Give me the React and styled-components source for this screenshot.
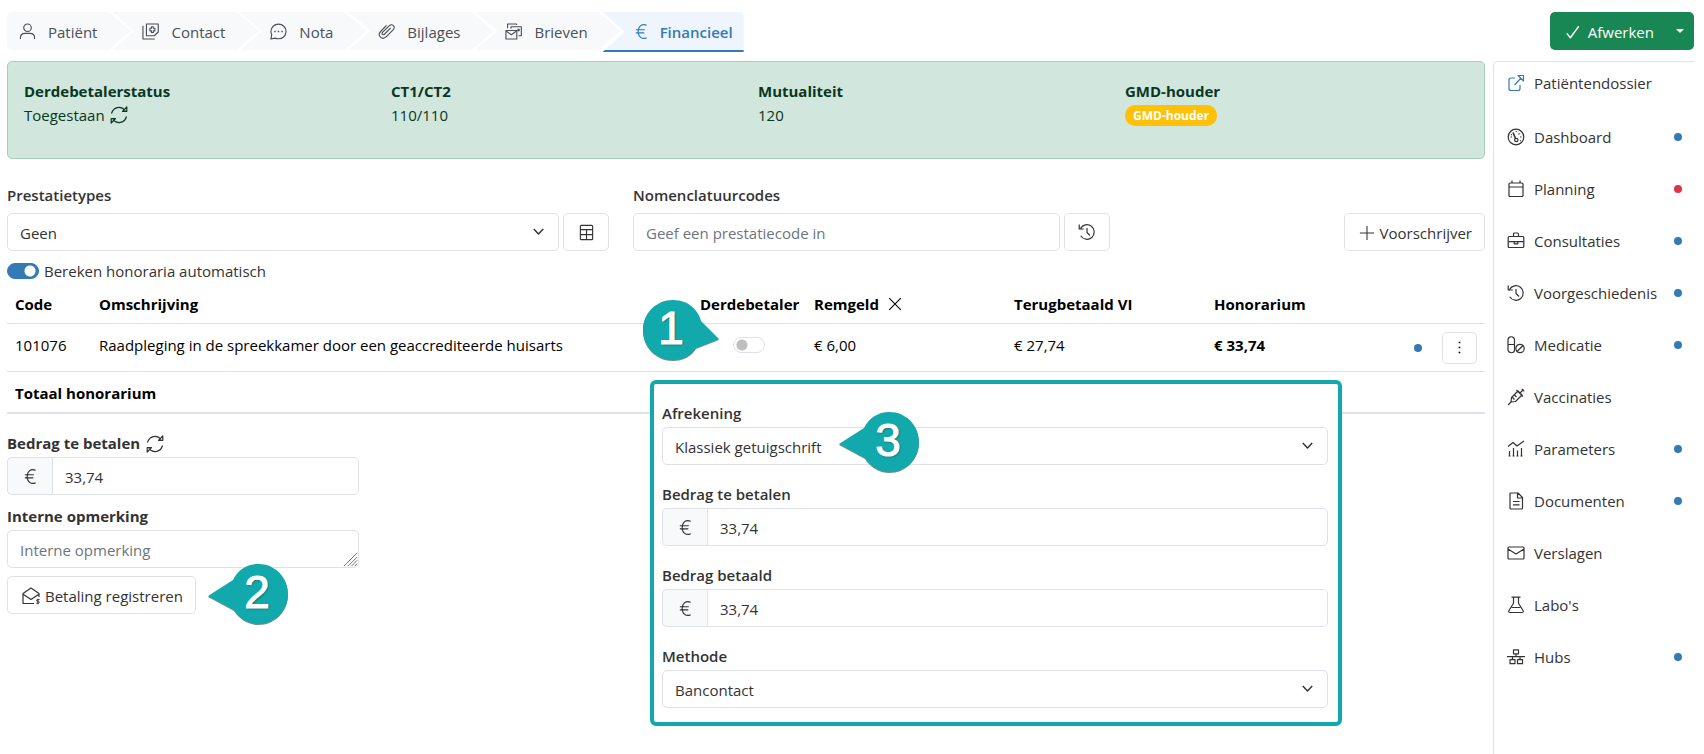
import React, { useState } from 'react';
import styled, { createGlobalStyle, css } from 'styled-components';

const GlobalStyle = createGlobalStyle`
  * {
    box-sizing: border-box;
  }

  body {
    margin: 0;
    background: #fff;
    color: #333;
    font-family: 'Segoe UI', 'Open Sans', 'Noto Sans', sans-serif;
    font-size: 15px;
    line-height: 24px;
  }

  button, input, select, textarea {
    font: inherit;
    color: inherit;
  }
`;

const Page = styled.div`
  display: flex;
  flex-direction: column;
  gap: 11px;
  min-height: 100vh;
  padding: 12px 10px 0 7px;
`;

const TopBar = styled.header`
  display: flex;
  justify-content: space-between;
  height: 38px;
`;

const Tabs = styled.nav`
  display: flex;
`;

const Tab = styled.a`
  display: flex;
  align-items: center;
  gap: 12px;
  height: 38px;
  margin-left: -18px;
  padding: 0 33px 0 30px;
  background: #f8f9fb;
  color: #495057;
  text-decoration: none;
  clip-path: polygon(0 0, calc(100% - 22px) 0, 100% 50%, calc(100% - 22px) 100%, 0 100%, 22px 50%);

  &:first-child {
    margin-left: 0;
    padding-left: 12px;
    border-radius: 5px 0 0 5px;
    clip-path: polygon(0 0, calc(100% - 22px) 0, 100% 50%, calc(100% - 22px) 100%, 0 100%);
  }

  ${(props) => props.$active && css`
    gap: 10px;
    height: 40px;
    padding-right: 11px;
    border-bottom: 2px solid #337ab7;
    border-radius: 0 5px 0 0;
    background: #eff5fd;
    color: #337ab7;
    font-weight: 600;
    clip-path: polygon(0 0, 100% 0, 100% 100%, 0 100%, 22px 50%);
  `}
`;

const TabLabel = styled.span`
  padding-top: 2px;
`;

const SplitButton = styled.div`
  display: flex;
  border-radius: 5px;
  overflow: hidden;
`;

const FinishButton = styled.button`
  display: flex;
  align-items: center;
  gap: 7px;
  padding: 2px 12px 0 15px;
  border: 0;
  background: #198754;
  color: #fff;
`;

const CaretButton = styled.button`
  display: flex;
  align-items: center;
  padding: 0 10px;
  border: 0;
  background: #198754;
  color: #fff;
`;

const Columns = styled.div`
  display: flex;
  flex: 1;
  gap: 8px;
`;

const Main = styled.main`
  flex: 1;
  min-width: 0;
`;

const Sidebar = styled.aside`
  width: 201px;
  border-top: 1px solid #dee2e6;
  border-left: 1px solid #dee2e6;
  border-top-left-radius: 5px;
`;

const SideLink = styled.a`
  display: flex;
  align-items: center;
  gap: 9px;
  height: 52px;
  padding: 0 12px 0 13px;
  color: #333;
  text-decoration: none;

  &:first-child {
    height: 42px;
    margin-bottom: 7px;

    svg {
      color: #337ab7;
    }
  }
`;

const SideLabel = styled.span`
  flex: 1;
  white-space: nowrap;
`;

const Dot = styled.span`
  display: block;
  width: 8px;
  height: 8px;
  border-radius: 50%;
  background: ${(props) => (props.$color === 'red' ? '#dc3545' : '#337ab7')};
`;

const StatusPanel = styled.dl`
  display: grid;
  grid-template-columns: repeat(4, 1fr);
  gap: 8px;
  height: 98px;
  margin: 0 0 24px;
  padding: 17px 0 0 16px;
  border: 1px solid #a3cfbb;
  border-radius: 5px;
  background: #d1e7dd;
  color: #0a3622;
`;

const StatusTerm = styled.dt`
  font-weight: 700;
`;

const StatusValue = styled.dd`
  display: flex;
  align-items: center;
  gap: 5px;
  height: 24px;
  margin: 0;
`;

const Badge = styled.span`
  padding: 0 8px;
  border-radius: 10px;
  background: #ffc107;
  color: #fff;
  font-size: 12px;
  font-weight: 700;
  line-height: 21px;
`;

const FilterBar = styled.div`
  display: flex;
  align-items: flex-end;
`;

const FilterGroup = styled.div`
  width: ${(props) => props.$width};
  margin-right: 24px;
`;

const Inline = styled.div`
  display: flex;
  gap: 4px;
`;

const Label = styled.label`
  display: block;
  margin-bottom: ${(props) => (props.$tight ? '2px' : '6px')};
  font-weight: ${(props) => (props.$bold ? 700 : 600)};
`;

const outlined = css`
  height: 38px;
  border: 1px solid #dee2e6;
  border-radius: 5px;
  background: #fff;
`;

const TextInput = styled.input`
  ${outlined}
  flex: 1;
  min-width: 0;
  padding: 2px 12px 0;

  &::placeholder {
    color: #6c757d;
    opacity: 1;
  }
`;

const SelectWrap = styled.div`
  position: relative;
  flex: 1;

  svg {
    position: absolute;
    top: 12px;
    right: 14px;
    pointer-events: none;
  }
`;

const SelectBox = styled.select`
  ${outlined}
  display: block;
  width: 100%;
  padding: 2px 36px 0 12px;
  appearance: none;
`;

const Button = styled.button`
  ${outlined}
  display: flex;
  align-items: center;
  gap: 5px;
  padding: 2px 12px 0 14px;
`;

const IconButton = styled.button`
  ${outlined}
  display: flex;
  flex: none;
  align-items: center;
  justify-content: center;
  width: ${(props) => (props.$small ? '35px' : '46px')};
  height: ${(props) => (props.$small ? '32px' : '38px')};
  padding: 0;
`;

const PushRight = styled.div`
  margin-left: auto;
`;

const SwitchRow = styled.label`
  display: flex;
  align-items: center;
  gap: 5px;
  height: 32px;
  padding-top: 8px;
`;

const Switch = styled.input`
  display: block;
  width: 32px;
  height: 16px;
  margin: 0;
  border: 1px solid #dee2e6;
  border-radius: 8px;
  background: radial-gradient(circle at 8px 7px, #bfbfbf 5px, transparent 6px) #fff;
  appearance: none;

  &:checked {
    border-color: #337ab7;
    background: radial-gradient(circle at 22px 7px, #fff 5px, transparent 6px) #337ab7;
  }
`;

const Table = styled.table`
  width: 100%;
  border-spacing: 0;
  table-layout: fixed;
  color: #000;
`;

const HeadCell = styled.th`
  height: 41px;
  padding: 2px 8px 0;
  border-bottom: 1px solid #dee2e6;
  font-weight: 700;
  text-align: left;
  white-space: nowrap;

  svg {
    margin-left: 4px;
    vertical-align: -2px;
  }
`;

const Cell = styled.td`
  height: 48px;
  padding: ${(props) => (props.$control ? '0 8px' : '0 8px 5px')};
  border-bottom: 1px solid #dee2e6;
  font-weight: ${(props) => (props.$bold ? 700 : 400)};
`;

const TotalCell = styled.td`
  height: 42px;
  padding: 2px 8px 0;
  border-bottom: 2px solid #dee2e6;
  font-weight: 700;
`;

// anchor for a numbered marker
const Anchor = styled.div`
  position: relative;
  display: flex;
  justify-content: ${(props) => (props.$center ? 'center' : 'flex-start')};
`;

const Lower = styled.section`
  position: relative;
`;

const PaymentForm = styled.form`
  display: flex;
  flex-direction: column;
  width: 352px;
  padding-top: 17px;
`;

const LabelRow = styled.div`
  display: flex;
  align-items: center;
  gap: 6px;
`;

const InputGroup = styled.div`
  display: flex;
`;

const Addon = styled.span`
  ${outlined}
  display: flex;
  align-items: center;
  justify-content: center;
  width: 45px;
  border-right: 0;
  border-radius: 5px 0 0 5px;
  background: #f8f9fa;
`;

const GroupInput = styled(TextInput)`
  border-radius: 0 5px 5px 0;
`;

const Field = styled.div`
  margin: 9px 0 8px;
`;

const NoteBox = styled.div`
  position: relative;

  svg {
    position: absolute;
    right: 1px;
    bottom: 1px;
    color: #777;
    pointer-events: none;
  }
`;

const TextArea = styled.textarea`
  ${outlined}
  display: block;
  width: 100%;
  padding: 7px 12px 0;
  overflow: hidden;
  resize: none;

  &::placeholder {
    color: #6c757d;
    opacity: 1;
  }
`;

const Settlement = styled.form`
  position: absolute;
  top: -34px;
  right: 143px;
  left: 643px;
  display: flex;
  flex-direction: column;
  gap: 17px;
  padding: 17px 10px 14px 8px;
  border: 4px solid #11a9ac;
  border-radius: 6px;
  background: #fff;
`;

const MarkerBox = styled.span`
  position: absolute;
  z-index: 1;
  top: ${(props) => props.$top};
  left: ${(props) => props.$left};
  width: 80px;
  height: 60px;
  padding-left: ${(props) => (props.$flip ? '0' : '18px')};
  padding-right: ${(props) => (props.$flip ? '24px' : '0')};
  color: #fff;
  font-family: 'Liberation Sans', Arial, sans-serif;
  font-size: 46px;
  font-weight: 400;
  line-height: 57px;
  text-align: center;
  text-shadow: 1px 1px 2px rgba(0, 0, 0, 0.4);
  -webkit-text-stroke: 1px #fff;
  pointer-events: none;

  svg {
    position: absolute;
    z-index: -1;
    inset: 0;
    filter: drop-shadow(0 1px 0 #6d8f90);
  }
`;

const icons = {
  user: <><circle cx="9" cy="5" r="4" /><path d="M1.5 17v-1.2c0-3.2 2.4-4.8 5-4.8h5c2.6 0 5 1.6 5 4.8V17" /></>,
  contact: <><path d="M4.700 1h12.500v8.500L13 13.500H4.700z" /><path d="M1 3v14h12.500" /><path d="M10 4h2v1.500h1.600v2.800H12V10h-2V8.300H8.400V5.500H10z" /></>,
  chat: <><path d="M1 17l.8-4.500A7.600 7.600 0 0 1 1 9c0-4.500 3.500-7.800 8-7.800s8 3.300 8 7.800-3.500 7.700-8 7.700c-1.300 0-2.400-.2-3.500-.7z" /><path d="M4.500 9H6M8.200 9h1.500M12 9h1.500" strokeWidth="1.600" /></>,
  clip: <path d="M13.500 5.200l-6.700 6.700c-1.600 1.600-3.400-.5-2-1.900l7-7c3.200-3.200 7.200 1.200 4.200 4.300l-7.200 7.200c-4.300 4.300-10-1.200-6-5.500L9 2.500" />,
  letters: <><path d="M1 8h11.500v9H1z" /><path d="M1.200 8.500l5.500 4 5.500-4M2.700 5.500V1h9.600v1.200M6.300 6V4h11v9.500h-3" /><path d="M13.700 6.800h1.300v1.300h-1.300z" fill="currentColor" /></>,
  euro: <path d="M14.500 2.500C9.500 0 5.500 3.600 5.500 9s4 9 9 6.500M3 7.200h9.500M3 10.500h9" />,
  check: <path d="M2 10.500l4 5L15.500 2.500" strokeWidth="1.6" />,
  refresh: <><path d="M1.500 7.500C3.200 1 11-.8 15 4.500M16.500 10.500C14.800 17 7 18.800 3 13.500" /><path d="M16.800 1v4.300H12.500zM1.200 17v-4.300H5.500z" /></>,
  external: <><path d="M8 4H4Q2 4 2 6v8.500q0 2 2 2h7q2 0 2-2V11" /><path d="M7.500 11L14 4M11 1.500h5.500V7z" /></>,
  gauge: <><circle cx="9" cy="9" r="7.800" /><path d="M6 4.500l2.500 6" strokeWidth="1.600" /><circle cx="9.300" cy="12" r="1.700" /><path d="M3.500 9H5M13 9h1.500M8.700 3.500h1.100M12.500 5.300l-1 1M4 6.500l.8.500M13.200 12.500l.8.500" /></>,
  calendar: <path d="M2 4q0-1 1-1h12q1 0 1 1v11.500q0 1-1 1H3q-1 0-1-1zM2 7h14M5 .5V3M13 .5V3" />,
  briefcase: <><path d="M1.200 5.500q0-1 1-1h13.600q1 0 1 1v9q0 1-1 1H2.200q-1 0-1-1zM6.500 4.500V2q0-1 1-1h3q1 0 1 1v2.500M1.200 9.700h15.600" /><path d="M7.200 10v1.800h3.600V10" /></>,
  history: <path d="M2.500 5.500A7.300 7.300 0 1 1 2.700 12.800M1.200 1.500v4.500h4.600M9 5v4.500l3 3" />,
  pills: <><path d="M1 4a3 3 0 0 1 6.500 0v9.500a3 3 0 0 1-6.500 0zM1 8.500h6.500" /><circle cx="13" cy="12.500" r="4.200" fill="#fff" /><path d="M10 15.500l6-6" /></>,
  syringe: <path d="M1 17l3-3M4 14l.5-4.500L11 3l4 4-6.500 6.500zM13 5l3.500-3.500M14.700.8l2.500 2.500M9.500 2l6.500 6.500M7.500 7l2 2M5.500 9.500l2 2" />,
  chart: <path d="M1 6.500l5-4 4 3.500 7-5M2.500 16v-5M6.500 16V8M10.500 16v-5.500M14.500 16V8M1.500 16h2M5.500 16h2M9.500 16h2M13.500 16h2" />,
  document: <path d="M3 2q0-1 1-1h7l4.500 4.500V16q0 1-1 1H4q-1 0-1-1zM10.500 1v5h5M6 9.500h6.500M6 12.800h6.500" />,
  mail: <path d="M1 4q0-1 1-1h14q1 0 1 1v10q0 1-1 1H2q-1 0-1-1zM1 5l8 5 8-5" />,
  flask: <path d="M4.500 1.200h9M6.500 1.200v6L2 14.500q-1 2 1.200 2h11.600q2.200 0 1.200-2L11.500 7.200v-6M4.700 11.500h8.600" />,
  hubs: <><path d="M6.500 1.800h5v4h-5zM3 11.700h5v4H3zM10.500 11.700h5v4h-5z" /><path d="M0 8.700h18M9 6v2.500M5.500 9v2.500M13 9v2.500" /></>,
  grid: <path d="M2.500 2.500q0-1 1-1h11q1 0 1 1v13q0 1-1 1h-11q-1 0-1-1zM2.500 6h13M2.500 11.200h13M9 6v10.500" />,
  plus: <path d="M9 1v16M1 9h16" />,
  cross: <path d="M2.500 2.500l13 13M15.500 2.500l-13 13" />,
  chevron: <path d="M2.500 5.500L9 12.500l6.500-7" strokeWidth="2" />,
  more: <path d="M9 2v2M9 8v2M9 14v2" strokeWidth="2" />,
  payment: <><path d="M12 16.500H1v-10L9 1l8 5.500v3.500M1.500 7.500L9 12.500l7.500-5" /><path d="M17.500 12.600h-2c-1.200 0-1.200 1.700 0 1.700h.8c1.200 0 1.200 1.900 0 1.900h-2M15.900 11.800v5.500" strokeWidth="1" /></>,
  handle: <path d="M1 17L17 1M6 17L17 6M10 17l7-7M14 17l3-3" />,
};

const Icon = ({ name, size = 18 }) => (
  <svg
    width={size}
    height={size}
    viewBox="0 0 18 18"
    fill="none"
    stroke="currentColor"
    strokeWidth="1.2"
    strokeLinejoin="round"
    aria-hidden="true"
  >
    {icons[name]}
  </svg>
);

const Marker = ({ number, top, left, flip }) => (
  <MarkerBox $top={top} $left={left} $flip={flip}>
    <svg width="80" height="60" viewBox="0 0 80 60" fill="#11a9ac" aria-hidden="true">
      {flip ? (
        <path d="M30 0C47 0 56 12 58 21L76 39 53 48C48 56 40 60 30 60 13 60 0 46.500 0 30S13 0 30 0z" />
      ) : (
        <path d="M50.500 0C67 0 80 13.500 80 30S67 60 50.500 60C40 60 31 54 26 46L0 32 25 16C30 6 39 0 50.500 0z" />
      )}
    </svg>
    {number}
  </MarkerBox>
);

const tabs = [
  { label: 'Patiënt', icon: 'user' },
  { label: 'Contact', icon: 'contact' },
  { label: 'Nota', icon: 'chat' },
  { label: 'Bijlages', icon: 'clip' },
  { label: 'Brieven', icon: 'letters' },
  { label: 'Financieel', icon: 'euro', active: true },
];

const sideLinks = [
  { label: 'Patiëntendossier', icon: 'external' },
  { label: 'Dashboard', icon: 'gauge', dot: 'blue' },
  { label: 'Planning', icon: 'calendar', dot: 'red' },
  { label: 'Consultaties', icon: 'briefcase', dot: 'blue' },
  { label: 'Voorgeschiedenis', icon: 'history', dot: 'blue' },
  { label: 'Medicatie', icon: 'pills', dot: 'blue' },
  { label: 'Vaccinaties', icon: 'syringe' },
  { label: 'Parameters', icon: 'chart', dot: 'blue' },
  { label: 'Documenten', icon: 'document', dot: 'blue' },
  { label: 'Verslagen', icon: 'mail' },
  { label: "Labo's", icon: 'flask' },
  { label: 'Hubs', icon: 'hubs', dot: 'blue' },
];

const Select = ({ id, options }) => (
  <SelectWrap>
    <SelectBox id={id}>
      {options.map((option) => (
        <option key={option}>{option}</option>
      ))}
    </SelectBox>
    <Icon name="chevron" size={13} />
  </SelectWrap>
);

const EuroInput = ({ id, value, onChange }) => (
  <InputGroup>
    <Addon><Icon name="euro" size={17} /></Addon>
    <GroupInput id={id} type="text" value={value} onChange={(e) => onChange(e.target.value)} />
  </InputGroup>
);

const App = () => {
  const [autoFee, setAutoFee] = useState(true);
  const [thirdParty, setThirdParty] = useState(false);
  const [amount, setAmount] = useState('33,74');
  const [due, setDue] = useState('33,74');
  const [paid, setPaid] = useState('33,74');
  const [note, setNote] = useState('');

  return (
    <Page>
      <GlobalStyle />
      <TopBar>
        <Tabs>
          {tabs.map((tab) => (
            <Tab key={tab.label} href="#" $active={tab.active}>
              <Icon name={tab.icon} size={17} />
              <TabLabel>{tab.label}</TabLabel>
            </Tab>
          ))}
        </Tabs>
        <SplitButton>
          <FinishButton type="button">
            <Icon name="check" size={16} />
            Afwerken
          </FinishButton>
          <CaretButton type="button" aria-label="Meer acties">
            <svg width="8" height="4" viewBox="0 0 8 4" fill="currentColor"><path d="M0 0h8L4 4z" /></svg>
          </CaretButton>
        </SplitButton>
      </TopBar>

      <Columns>
        <Main>
          <StatusPanel>
            <div>
              <StatusTerm>Derdebetalerstatus</StatusTerm>
              <StatusValue>Toegestaan <Icon name="refresh" /></StatusValue>
            </div>
            <div>
              <StatusTerm>CT1/CT2</StatusTerm>
              <StatusValue>110/110</StatusValue>
            </div>
            <div>
              <StatusTerm>Mutualiteit</StatusTerm>
              <StatusValue>120</StatusValue>
            </div>
            <div>
              <StatusTerm>GMD-houder</StatusTerm>
              <StatusValue><Badge>GMD-houder</Badge></StatusValue>
            </div>
          </StatusPanel>

          <FilterBar>
            <FilterGroup $width="602px">
              <Label htmlFor="types">Prestatietypes</Label>
              <Inline>
                <Select id="types" options={['Geen']} />
                <IconButton type="button" aria-label="Tabel"><Icon name="grid" size={17} /></IconButton>
              </Inline>
            </FilterGroup>
            <FilterGroup $width="477px">
              <Label htmlFor="codes">Nomenclatuurcodes</Label>
              <Inline>
                <TextInput id="codes" type="text" placeholder="Geef een prestatiecode in" />
                <IconButton type="button" aria-label="Geschiedenis"><Icon name="history" /></IconButton>
              </Inline>
            </FilterGroup>
            <PushRight>
              <Button type="button">
                <Icon name="plus" size={16} />
                Voorschrijver
              </Button>
            </PushRight>
          </FilterBar>

          <SwitchRow>
            <Switch type="checkbox" role="switch" checked={autoFee} onChange={(e) => setAutoFee(e.target.checked)} />
            Bereken honoraria automatisch
          </SwitchRow>

          <Table>
            <colgroup>
              <col width="84" />
              <col />
              <col width="114" />
              <col width="200" />
              <col width="200" />
              <col width="200" />
              <col width="28" />
              <col width="51" />
            </colgroup>
            <thead>
              <tr>
                <HeadCell>Code</HeadCell>
                <HeadCell>Omschrijving</HeadCell>
                <HeadCell>Derdebetaler</HeadCell>
                <HeadCell>Remgeld <Icon name="cross" size={16} /></HeadCell>
                <HeadCell>Terugbetaald VI</HeadCell>
                <HeadCell>Honorarium</HeadCell>
                <HeadCell />
                <HeadCell />
              </tr>
            </thead>
            <tbody>
              <tr>
                <Cell>101076</Cell>
                <Cell>Raadpleging in de spreekkamer door een geaccrediteerde huisarts</Cell>
                <Cell>
                  <Anchor $center>
                    <Switch
                      type="checkbox"
                      role="switch"
                      aria-label="Derdebetaler"
                      checked={thirdParty}
                      onChange={(e) => setThirdParty(e.target.checked)}
                    />
                    <Marker number="1" top="-37px" left="-57px" flip />
                  </Anchor>
                </Cell>
                <Cell>€ 6,00</Cell>
                <Cell>€ 27,74</Cell>
                <Cell $bold>€ 33,74</Cell>
                <Cell $control><Dot /></Cell>
                <Cell $control>
                  <IconButton $small type="button" aria-label="Opties"><Icon name="more" size={15} /></IconButton>
                </Cell>
              </tr>
              <tr>
                <TotalCell colSpan={8}>Totaal honorarium</TotalCell>
              </tr>
            </tbody>
          </Table>

          <Lower>
            <PaymentForm>
              <LabelRow>
                <Label $bold $tight htmlFor="amount">Bedrag te betalen</Label>
                <Icon name="refresh" />
              </LabelRow>
              <EuroInput id="amount" value={amount} onChange={setAmount} />
              <Field>
                <Label $bold $tight htmlFor="note">Interne opmerking</Label>
                <NoteBox>
                  <TextArea
                    id="note"
                    rows="1"
                    placeholder="Interne opmerking"
                    value={note}
                    onChange={(e) => setNote(e.target.value)}
                  />
                  <Icon name="handle" size={15} />
                </NoteBox>
              </Field>
              <Anchor>
                <Button type="button">
                  <Icon name="payment" />
                  Betaling registreren
                </Button>
                <Marker number="2" top="-12px" left="201px" />
              </Anchor>
            </PaymentForm>

            <Settlement>
              <div>
                <Label $tight htmlFor="settlement">Afrekening</Label>
                <Anchor>
                  <Select id="settlement" options={['Klassiek getuigschrift']} />
                  <Marker number="3" top="-15px" left="177px" />
                </Anchor>
              </div>
              <div>
                <Label $tight htmlFor="due">Bedrag te betalen</Label>
                <EuroInput id="due" value={due} onChange={setDue} />
              </div>
              <div>
                <Label $tight htmlFor="paid">Bedrag betaald</Label>
                <EuroInput id="paid" value={paid} onChange={setPaid} />
              </div>
              <div>
                <Label $tight htmlFor="method">Methode</Label>
                <Select id="method" options={['Bancontact']} />
              </div>
            </Settlement>
          </Lower>
        </Main>

        <Sidebar>
          <nav>
            {sideLinks.map((link) => (
              <SideLink key={link.label} href="#">
                <Icon name={link.icon} />
                <SideLabel>{link.label}</SideLabel>
                {link.dot && <Dot $color={link.dot} />}
              </SideLink>
            ))}
          </nav>
        </Sidebar>
      </Columns>
    </Page>
  );
};

export default App;
